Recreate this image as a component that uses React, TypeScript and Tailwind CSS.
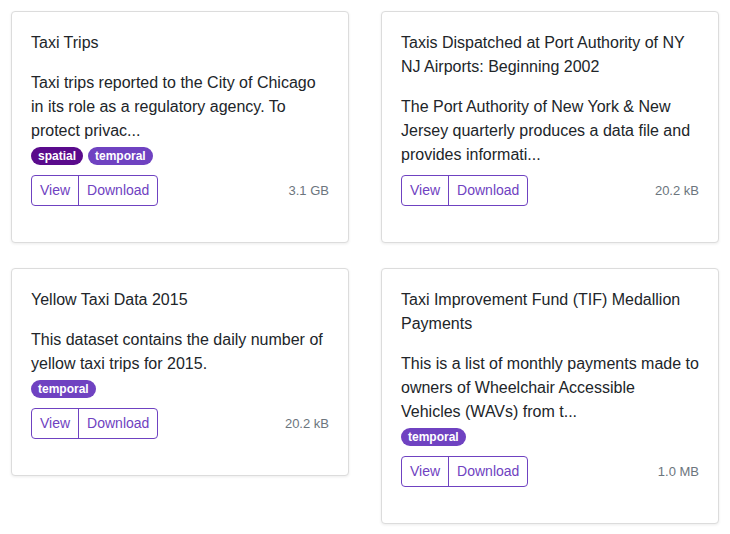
import React from 'react';

interface Dataset {
  title: string;
  description: string;
  tags: string[];
  size: string;
}

const datasets: Dataset[] = [
  {
    title: 'Taxi Trips',
    description: 'Taxi trips reported to the City of Chicago in its role as a regulatory agency. To protect privac...',
    tags: ['spatial', 'temporal'],
    size: '3.1 GB',
  },
  {
    title: 'Taxis Dispatched at Port Authority of NY NJ Airports: Beginning 2002',
    description: 'The Port Authority of New York & New Jersey quarterly produces a data file and provides informati...',
    tags: [],
    size: '20.2 kB',
  },
  {
    title: 'Yellow Taxi Data 2015',
    description: 'This dataset contains the daily number of yellow taxi trips for 2015.',
    tags: ['temporal'],
    size: '20.2 kB',
  },
  {
    title: 'Taxi Improvement Fund (TIF) Medallion Payments',
    // keep the wrap the same as the original page
    description: 'This is a list of monthly payments made to owners of Wheelchair Accessible\nVehicles (WAVs) from t...',
    tags: ['temporal'],
    size: '1.0 MB',
  },
];

const Tag: React.FC<{ name: string }> = ({ name }) => (
  <span
    className={
      'inline-flex items-center h-[18px] px-[7px] rounded-full text-[12px] font-bold text-white leading-none ' +
      (name === 'spatial' ? 'bg-[#5a0b8c]' : 'bg-[#6f42c1]')
    }
  >
    {name}
  </span>
);

const DatasetCard: React.FC<{ data: Dataset }> = ({ data }) => {
  return (
    <div className="bg-white border border-[#dcdcdc] rounded-[4px] shadow-[0_1px_3px_rgba(0,0,0,0.08)] pt-[19px] px-[19px] pb-[36px]">
      <h5 className="text-[16px] leading-6 text-[#212529] mb-4">{data.title}</h5>
      <p className="text-[16px] leading-6 text-[#212529] whitespace-pre-line">{data.description}</p>
      {data.tags.length > 0 && (
        <div className="flex gap-[5px] mt-[4px]">
          {data.tags.map((t) => (
            <Tag key={t} name={t} />
          ))}
        </div>
      )}
      <div className={'flex items-center justify-between ' + (data.tags.length > 0 ? 'mt-[10px]' : 'mt-[8px]')}>
        <div className="flex border border-[#6f42c1] rounded-[4px] h-[31px] text-[14px] text-[#6f42c1]">
          <button className="px-[8px] h-full">View</button>
          <button className="px-[8px] h-full border-l border-[#6f42c1]">Download</button>
        </div>
        <span className="text-[13px] text-[#6c757d]">{data.size}</span>
      </div>
    </div>
  );
};

const App: React.FC = () => {
  return (
    <div className="w-[730px] min-h-[534px] bg-white font-['Liberation_Sans',Arial,sans-serif]">
      <div className="grid grid-cols-2 gap-x-8 gap-y-[25px] items-start pt-[11px] px-[11px]">
        {datasets.map((d) => (
          <DatasetCard key={d.title} data={d} />
        ))}
      </div>
    </div>
  );
};

export default App;
